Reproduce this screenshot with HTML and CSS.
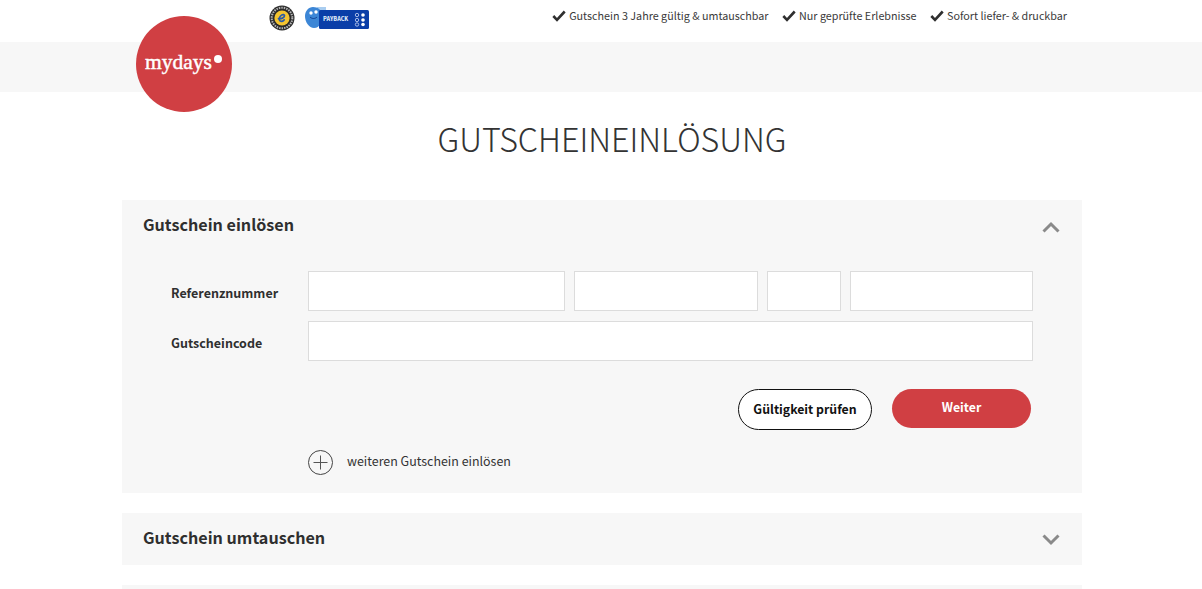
FILE: index.html
```html
<!DOCTYPE html>
<html lang="de">
<head>
<meta charset="utf-8">
<title>Gutscheineinlösung</title>
<link rel="stylesheet" href="styles.css">
</head>
<body>
<header class="top">
  <div class="top-inner">
    <div class="badges">
      <svg class="badge-ts" width="26" height="26" viewBox="0 0 26 26">
        <circle cx="13" cy="13" r="12.5" fill="#2b2b2b"/>
        <circle cx="13" cy="13" r="10.300" fill="none" stroke="#b5b5b5" stroke-width="2" stroke-dasharray="1.500 1"/>
        <circle cx="13" cy="13" r="7.600" fill="#f4c430"/>
        <path d="M9.500 13.600c2.600.3 6-.7 6-2.800 0-1.400-1.700-1.600-3-.7-2 1.300-3 4.500-1.500 5.800 1.200 1 3 .3 4.200-1" fill="none" stroke="#2a5aa8" stroke-width="1.700" stroke-linecap="round"/>
      </svg>
      <svg class="badge-pb" width="64" height="23" viewBox="0 0 64 23">
        <rect x="12" y="0" width="9" height="8" fill="#a9cdf0"/>
        <path d="M0 9c0-5 3.500-9 8-9 5 0 9 3 9 9 0 6-2 12-8 12-5 0-9-6-9-12z" fill="#3c86d6"/>
        <circle cx="6" cy="6" r="1.700" fill="#fff"/>
        <circle cx="11" cy="5" r="1.700" fill="#fff"/>
        <path d="M5 10c2 2 5 2 7 0" fill="none" stroke="#0f3f8f" stroke-width="1"/>
        <rect x="14" y="3" width="50" height="19" rx="1.500" fill="#0a3ea8"/>
        <text class="pb-text" x="18" y="13.500">PAYBACK</text>
        <g fill="#fff">
          <circle cx="58" cy="8" r="1.800"/><circle cx="58" cy="13" r="1.800"/><circle cx="58" cy="17.500" r="1.800"/>
        </g>
        <g fill="none" stroke="#c9d6f2" stroke-width=".8">
          <circle cx="52" cy="8" r="1.700"/><circle cx="52" cy="13" r="1.700"/><circle cx="52" cy="17.500" r="1.700"/>
        </g>
      </svg>
    </div>
    <ul class="usps">
      <li class="usp">
        <svg class="check" width="14" height="12" viewBox="0 0 14 12"><path d="M1.300 6 5 9.800l7.700-8.300" fill="none" stroke="#2f2f2f" stroke-width="2.600"/></svg>
        Gutschein 3 Jahre gültig &amp; umtauschbar
      </li>
      <li class="usp">
        <svg class="check" width="14" height="12" viewBox="0 0 14 12"><path d="M1.300 6 5 9.800l7.700-8.300" fill="none" stroke="#2f2f2f" stroke-width="2.600"/></svg>
        Nur geprüfte Erlebnisse
      </li>
      <li class="usp">
        <svg class="check" width="14" height="12" viewBox="0 0 14 12"><path d="M1.300 6 5 9.800l7.700-8.300" fill="none" stroke="#2f2f2f" stroke-width="2.600"/></svg>
        Sofort liefer- &amp; druckbar
      </li>
    </ul>
  </div>
</header>
<div class="band">
  <div class="logo"><span class="logo-text">mydays</span><span class="logo-dot"></span></div>
</div>
<main class="page">
  <h1 class="title">GUTSCHEINEINLÖSUNG</h1>

  <section class="panel panel-open">
    <div class="panel-head">
      <h2 class="panel-title">Gutschein einlösen</h2>
      <svg class="chev" width="18" height="12" viewBox="0 0 18 12"><path d="M1.500 10.500 9 3l7.500 7.500" fill="none" stroke="#8a8a8a" stroke-width="3"/></svg>
    </div>
    <form class="form">
      <div class="row">
        <label class="label">Referenznummer</label>
        <input class="field f1" type="text">
        <input class="field f2" type="text">
        <input class="field f3" type="text">
        <input class="field f4" type="text">
      </div>
      <div class="row">
        <label class="label">Gutscheincode</label>
        <input class="field f-wide" type="text">
      </div>
      <div class="actions">
        <button class="btn btn-outline" type="button">Gültigkeit prüfen</button>
        <button class="btn btn-red" type="button">Weiter</button>
      </div>
      <div class="more">
        <svg class="plus" width="25" height="25" viewBox="0 0 25 25"><circle cx="12.500" cy="12.500" r="12" fill="none" stroke="#444" stroke-width="1"/><path d="M12.500 5.500v14M5.500 12.500h14" stroke="#555" stroke-width="1" fill="none"/></svg>
        <span class="more-text">weiteren Gutschein einlösen</span>
      </div>
    </form>
  </section>

  <section class="panel">
    <div class="panel-head panel-head-closed">
      <h2 class="panel-title">Gutschein umtauschen</h2>
      <svg class="chev" width="18" height="12" viewBox="0 0 18 12"><path d="M1.500 1.500 9 9l7.500-7.500" fill="none" stroke="#8a8a8a" stroke-width="3"/></svg>
    </div>
  </section>

  <section class="panel panel-cut"></section>
</main>
</body>
</html>
```

FILE: styles.css
```css
* { box-sizing: border-box; }
html, body { margin: 0; padding: 0; height: 589px; overflow: hidden; }
body {
  background: #fff;
  color: #2f2f2f;
  font-family: "Noto Sans CJK SC", "Open Sans", sans-serif;
}
.top { height: 42px; }
.top-inner {
  width: 960px;
  margin-left: 122px;
  display: flex;
  justify-content: space-between;
  padding-right: 15px;
}
.badges { display: flex; align-items: flex-start; margin-left: 147px; padding-top: 5px; }
.badge-ts { margin-right: 10px; }
.badge-pb { margin-top: 2px; }
.pb-text { font-size: 5.500px; font-weight: 900; fill: #dfe7f7; }
.usps { list-style: none; margin: 0; padding: 1px 0 0; display: flex; gap: 13.500px; }
.usp {
  display: flex;
  align-items: center;
  gap: 3px;
  font-size: 10.750px;
  line-height: 18px;
  color: #3a3a3a;
}
.band { height: 50px; background: #f7f7f7; position: relative; }
.logo {
  position: absolute;
  left: 136px;
  top: -26px;
  width: 96px;
  height: 96px;
  border-radius: 50%;
  background: #d03f43;
}
.logo-text {
  position: absolute;
  left: 9px;
  top: 33px;
  font-family: "Liberation Serif", serif;
  font-size: 21.500px;
  font-weight: 400;
  line-height: 26px;
  color: #fff;
  -webkit-text-stroke: .45px #fff;
}
.logo-dot {
  position: absolute;
  left: 78px;
  top: 39px;
  width: 8px;
  height: 8px;
  border-radius: 50%;
  background: #fff;
}
.page { width: 960px; margin-left: 122px; }
.title {
  margin: 0;
  height: 108px;
  padding-top: 23px;
  text-align: center;
  font-size: 32.250px;
  line-height: 46px;
  font-weight: 300;
  color: #333;
  padding-left: 20px;
}
.panel { background: #f7f7f7; margin-bottom: 20px; }
.panel-open { height: 293px; }
.panel-head {
  display: flex;
  justify-content: space-between;
  align-items: center;
  height: 51px;
  padding: 0 22px 0 21px;
}
.panel-head-closed { height: 52px; }
.panel-title { margin: 0 0 4px; font-size: 16.150px; line-height: 24px; font-weight: 700; color: #2f2f2f; }
.chev { margin-top: 2px; }
.form { padding-top: 20px; }
.row { display: flex; align-items: center; height: 40px; margin-bottom: 10px; padding-left: 49px; }
.label { width: 137px; padding-top: 2px; font-size: 12.500px; font-weight: 700; color: #2f2f2f; }
.field {
  height: 40px;
  border: 1px solid #dcdcdc;
  background: #fff;
  border-radius: 0;
  padding: 0 8px;
  margin: 0 9px 0 0;
}
.f1 { width: 257px; }
.f2 { width: 184px; }
.f3 { width: 74px; }
.f4 { width: 183px; margin-right: 0; }
.f-wide { width: 725px; margin-right: 0; }
.actions { display: flex; justify-content: flex-end; align-items: flex-start; gap: 20px; padding: 18px 51px 0 0; }
.btn { font-family: inherit; font-size: 12.300px; font-weight: 700; cursor: pointer; padding: 0 0 2px; }
.btn-outline {
  width: 134px;
  height: 41px;
  border: 1px solid #111;
  border-radius: 21px;
  background: #fff;
  color: #111;
}
.btn-red {
  width: 139px;
  height: 39px;
  padding-bottom: 4px;
  border: 0;
  border-radius: 20px;
  background: #d03f43;
  color: #fff;
}
.more { display: flex; align-items: center; gap: 14px; margin: 20px 0 0 186px; }
.more-text { font-size: 12.450px; padding-bottom: 3px; color: #333; }
.panel-cut { height: 4px; margin: 0; }
```
